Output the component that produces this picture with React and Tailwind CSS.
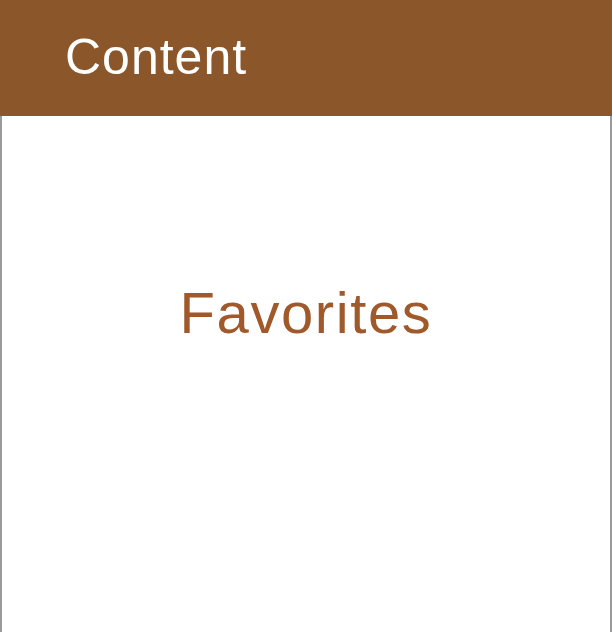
export default function App() {
  return (
    <div className="w-[612px] h-[632px] flex flex-col bg-white overflow-hidden font-['Liberation_Sans',Arial,sans-serif]">
      {/* top bar */}
      <header className="h-[116px] shrink-0 bg-[#8b572a] flex items-start pl-[65px] pt-[32px]">
        <h1 className="text-[50px] leading-none text-white tracking-[1px]">Content</h1>
      </header>

      {/* page body */}
      <main className="flex-1 border-x-2 border-[#9a9a9a] flex justify-center pt-[168px]">
        <p className="text-[58px] leading-none text-[#a0592a] tracking-[1.6px]">Favorites</p>
      </main>
    </div>
  );
}
